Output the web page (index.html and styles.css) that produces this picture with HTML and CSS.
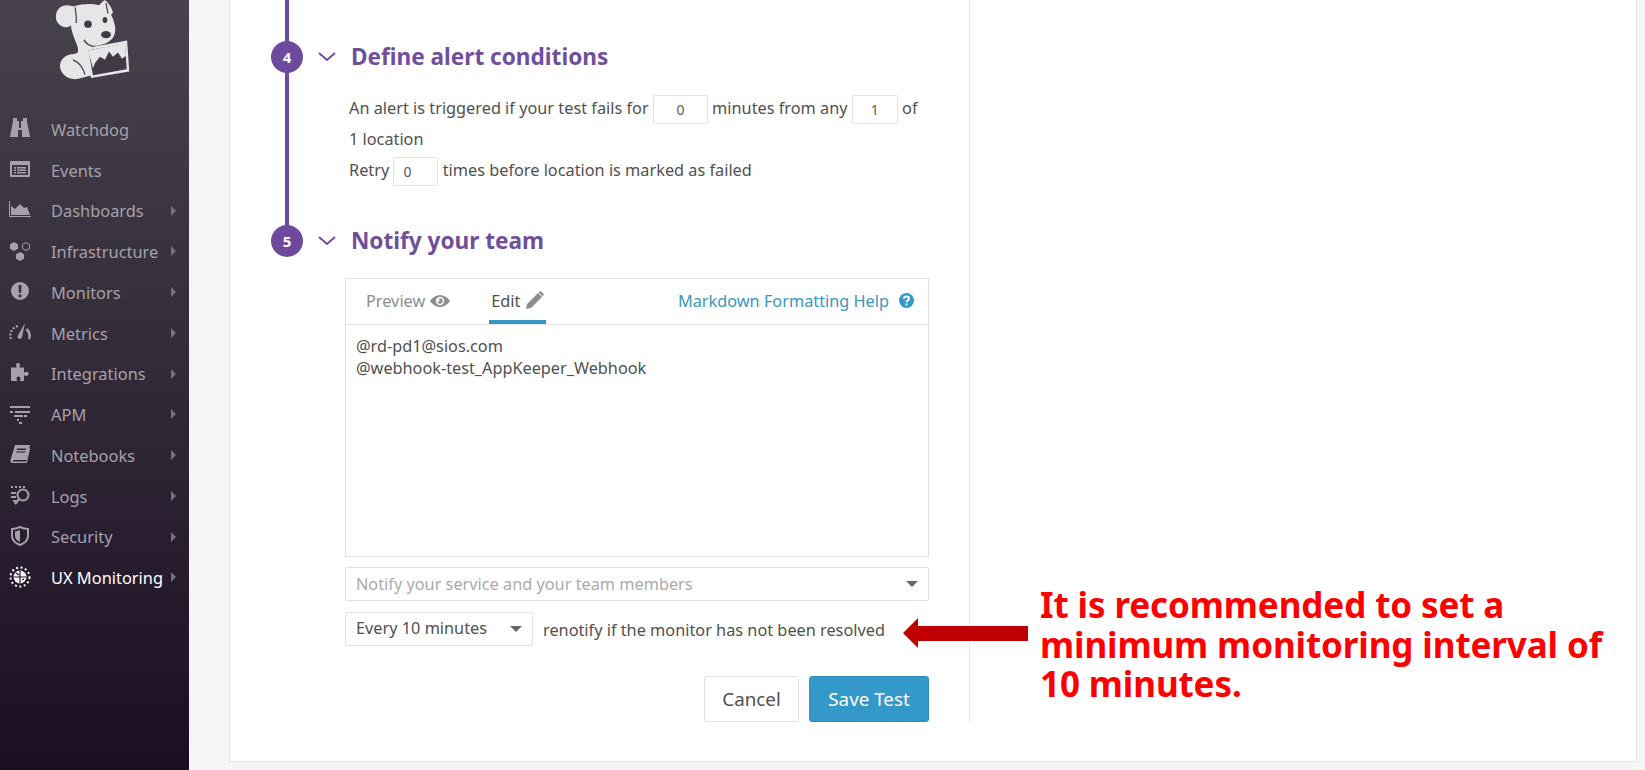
FILE: index.html
```html
<!DOCTYPE html>
<html lang="en">
<head>
    <meta charset="UTF-8">
    <meta name="viewport" content="width=device-width, initial-scale=1.0">
    <title>New Browser Test</title>
    <link rel="stylesheet" href="styles.css">
</head>
<body>
    <nav class="sidebar">
        <div class="logo">
            <svg width="120" height="105" viewBox="0 0 120 100" preserveAspectRatio="none">
                <path fill="#e6e5e7" d="M41 6c8-2 17-3 25-1 2-2 4-4 6-5 4 3 7 8 8 12l-2 2c3 5 5 12 4 17-1 5-5 9-11 11l-11 3-5 1 3 26-9 2c-3 1-7 2-10 1-7-1-12-7-12-12 0-6 5-10 10-11 3-1 7 0 8-3 1-4-3-10-5-16-1-3-2-6-2-9-2 2-4 2-6 2-6-1-10-6-9-12 1-6 6-9 11-9 3 0 5 1 7 1z"/>
                <path fill="none" stroke="#3f3a46" stroke-width="1.200" d="M42 7c1 5 2 10 1 15M73 3l2 10M40 57c5 2 10 7 12 14"/>
                <ellipse cx="55" cy="23" rx="3.800" ry="3.500" fill="#3f3a46"/>
                <ellipse cx="72" cy="19" rx="2.400" ry="2.800" fill="#3f3a46"/>
                <ellipse cx="73" cy="33" rx="5" ry="3.400" fill="#3f3a46"/>
                <path fill="none" stroke="#3f3a46" stroke-width="1.400" d="M51 38c3 5 9 7 15 6"/>
                <path fill="#3f3a46" stroke="#e6e5e7" stroke-width="2.400" d="M54 47l39-7 2 27-36 6z"/>
                <path fill="#e6e5e7" d="M55 48l37-7 1 12-4 3-4-6-5 4-4-5-4 8-5-3-5 6-2 5z"/>
            </svg>
        </div>
        <a class="nav-item">
            <svg class="nav-icon" viewBox="0 0 22 22"><path fill="currentColor" d="M4 1h4v3h2v7h2V4h2V1h4v3l3 16h-8v-7h-4v7H1L4 4z"/></svg>
            <span>Watchdog</span>
        </a>
        <a class="nav-item">
            <svg class="nav-icon" viewBox="0 0 22 22"><path fill="currentColor" fill-rule="evenodd" d="M2 3h18a1 1 0 0 1 1 1v14a1 1 0 0 1-1 1H2a1 1 0 0 1-1-1V4a1 1 0 0 1 1-1zm1 4v10h16V7zm2 2h2v1.500H5zm3 0h9v1.500H8zm-3 2.500h2V13H5zm3 0h9V13H8zM5 14h2v1.500H5zm3 0h9v1.500H8z"/></svg>
            <span>Events</span>
        </a>
        <a class="nav-item has-sub">
            <svg class="nav-icon" viewBox="0 0 22 22"><path fill="currentColor" d="M0 2h1v15h21v1H0z"/><path fill="currentColor" d="M2 16V7l4 3 5-5 4 4 3-1 3 8z"/></svg>
            <span>Dashboards</span>
        </a>
        <a class="nav-item has-sub">
            <svg class="nav-icon" viewBox="0 0 22 22"><path fill="currentColor" d="M5 2l4 2.300v4.500L5 11 1 8.800V4.300zM11 12l4 2.300v4.500L11 21l-4-2.200v-4.500z"/><path fill="none" stroke="currentColor" d="M17 2.500l3.500 2v4l-3.500 2-3.500-2v-4z"/></svg>
            <span>Infrastructure</span>
        </a>
        <a class="nav-item has-sub">
            <svg class="nav-icon" viewBox="0 0 22 22"><path fill="currentColor" fill-rule="evenodd" d="M11 2a9 9 0 1 1 0 18 9 9 0 0 1 0-18zM9.500 5l.4 8h2.200l.4-8zM11 14.200a1.600 1.600 0 1 0 0 3.200 1.600 1.600 0 0 0 0-3.200z"/></svg>
            <span>Monitors</span>
        </a>
        <a class="nav-item has-sub">
            <svg class="nav-icon" viewBox="0 0 22 22"><path fill="none" stroke="currentColor" stroke-width="2.200" stroke-dasharray="2 1.600" d="M2 18a9.500 9.500 0 0 1 8-13"/><path fill="none" stroke="currentColor" stroke-width="2.400" d="M17.500 8a9.500 9.500 0 0 1 2.500 10"/><path fill="currentColor" d="M16 2l-7 12.500a2.200 2.200 0 1 0 4 1.500z"/></svg>
            <span>Metrics</span>
        </a>
        <a class="nav-item has-sub">
            <svg class="nav-icon" viewBox="0 0 22 22"><path fill="currentColor" d="M7 3a2 2 0 0 1 4 0c0 1-.5 1.500-.5 2.500H15v5c1 0 1.500-.8 2.500-.8a2 2 0 0 1 0 4.300c-1 0-1.500-.8-2.500-.8V19h-4c0-1 .5-1.500.5-2.500a2 2 0 0 0-4 0c0 1 .5 1.500.5 2.500H2V5.500h5.500C7.500 4.500 7 4 7 3z"/></svg>
            <span>Integrations</span>
        </a>
        <a class="nav-item has-sub">
            <svg class="nav-icon" viewBox="0 0 22 22"><path fill="currentColor" d="M1 3h20v2H1zM1 8h3v2H1zM6 8h15v2H6zM5 12h9v2H5zM15 12h3v2h-3zM8 16h2v2H8zM10 19h3v2h-3z"/></svg>
            <span>APM</span>
        </a>
        <a class="nav-item has-sub">
            <svg class="nav-icon" viewBox="0 0 22 22"><path fill="currentColor" fill-rule="evenodd" d="M6 2h15l-3 15H5c-1 0-1.500 1-1 1.500h13.500l3-13.500.5 1-3 14H4c-2 0-3-1-2.500-3zM8 5.500l-.3 1.500h9l.3-1.500zm-.6 3l-.2 1h9l.2-1z"/></svg>
            <span>Notebooks</span>
        </a>
        <a class="nav-item has-sub">
            <svg class="nav-icon" viewBox="0 0 22 22"><path fill="currentColor" d="M2 2h2v2H2zM6 2h2v2H6zM10 2h2v2h-2zM14 2h2v2h-2zM2 8h5v2H2zM2 12h5v2H2zM4 16h3v2H4z"/><circle cx="14" cy="11" r="5.500" fill="none" stroke="currentColor" stroke-width="2"/><path stroke="currentColor" stroke-width="2.400" d="M10 15l-4 5"/></svg>
            <span>Logs</span>
        </a>
        <a class="nav-item has-sub">
            <svg class="nav-icon" viewBox="0 0 22 22"><path fill="none" stroke="currentColor" stroke-width="2" d="M11 2c3 1.500 5 2 8 2v7c0 4-3 7-8 9-5-2-8-5-8-9V4c3 0 5-.5 8-2z"/><path fill="currentColor" d="M11 5c-2 1-3.500 1.200-5 1.300V11c0 2.500 2 4.500 5 6z"/></svg>
            <span>Security</span>
        </a>
        <a class="nav-item has-sub is-active">
            <svg class="nav-icon" viewBox="0 0 22 22"><circle cx="11" cy="11" r="6.500" fill="currentColor"/><path stroke="#1f1329" stroke-width="1.200" fill="none" d="M11 4.500v13M4.500 11h13M7 7l3 2M13 14l2-1"/><circle cx="11" cy="11" r="9.500" fill="none" stroke="currentColor" stroke-width="2" stroke-dasharray="2 2.500"/></svg>
            <span>UX Monitoring</span>
        </a>
    </nav>

    <main class="main">
        <div class="card">
            <section class="form-pane">
                <div class="step">
                    <header class="step-head">
                        <span class="step-num">4</span>
                        <svg class="chevron" viewBox="0 0 18 10"><path fill="none" stroke="currentColor" stroke-width="2" d="M1 1l8 7 8-7"/></svg>
                        <h2>Define alert conditions</h2>
                    </header>
                    <div class="step-body">
                        <p class="cond">An alert is triggered if your test fails for <input class="num num-wide" value="0"> minutes from any <input class="num" value="1"> of 1 location</p>
                        <p class="cond retry">Retry <input class="num num-left" value="0"> times before location is marked as failed</p>
                    </div>
                </div>
                <div class="step step-notify">
                    <header class="step-head">
                        <span class="step-num">5</span>
                        <svg class="chevron" viewBox="0 0 18 10"><path fill="none" stroke="currentColor" stroke-width="2" d="M1 1l8 7 8-7"/></svg>
                        <h2>Notify your team</h2>
                    </header>
                    <div class="step-body notify-body">
                        <div class="editor">
                            <div class="tabs">
                                <a class="tab">Preview
                                    <svg width="20" height="14" viewBox="0 0 20 14"><path fill="#8d8d8d" fill-rule="evenodd" d="M10 1c4 0 7.500 2.500 10 6-2.500 3.500-6 6-10 6S2.500 10.500 0 7c2.500-3.500 6-6 10-6zm0 1.800a4.200 4.200 0 1 0 0 8.400 4.200 4.200 0 0 0 0-8.400zm0 1.500a2.700 2.700 0 1 1-2.700 2.700c0 .6.800 1 1.500.6.700-.3 1-1.200.5-2-.3-.6-.3-1.100.7-1.300z"/></svg>
                                </a>
                                <a class="tab is-current">Edit
                                    <svg width="19" height="19" viewBox="0 0 19 19"><path fill="#8d8d8d" d="M13 2l4 4L6 17l-5 1 1-5zM14.500 .8a1.500 1.500 0 0 1 2 0l1.700 1.700a1.500 1.500 0 0 1 0 2L17.500 5.300 13.700 1.500z"/></svg>
                                </a>
                                <a class="help">Markdown Formatting Help
                                    <svg width="15" height="15" viewBox="0 0 15 15"><circle cx="7.500" cy="7.500" r="7.500" fill="#3498c9"/><path fill="none" stroke="#fff" stroke-width="2" d="M5 5.800c0-3 5-3 5 0 0 1.800-2.500 1.700-2.500 3.400"/><rect x="6.500" y="10.500" width="2" height="2" fill="#fff"/></svg>
                                </a>
                            </div>
                            <div class="message">@rd-pd1@sios.com<br>@webhook-test_AppKeeper_Webhook</div>
                        </div>
                        <div class="select select-full">
                            <span class="placeholder">Notify your service and your team members</span>
                            <i class="caret"></i>
                        </div>
                        <div class="renotify">
                            <div class="select select-short">
                                <span class="select-value">Every 10 minutes</span>
                                <i class="caret"></i>
                            </div>
                            <span class="renotify-text">renotify if the monitor has not been resolved</span>
                        </div>
                        <div class="actions">
                            <button class="btn">Cancel</button>
                            <button class="btn btn-primary">Save Test</button>
                        </div>
                    </div>
                </div>
            </section>
            <aside class="side-pane"></aside>
        </div>
    </main>

    <svg class="note-arrow" width="125" height="30" viewBox="0 0 125 30"><path fill="#c00000" d="M0 15L15 0v8h110v15H15v7z"/></svg>
    <p class="note">It is recommended to set a minimum monitoring interval of 10 minutes.</p>
</body>
</html>
```

FILE: styles.css
```css
* {
    box-sizing: border-box;
}
body {
    display: flex;
    height: 770px;
    margin: 0;
    overflow: hidden;
    background-color: #f5f5f5;
    color: #505050;
    font-family: "Noto Sans", sans-serif;
    font-size: 16.3px;
}

.sidebar {
    flex: 0 0 189px;
    background: linear-gradient(#47424c, #3a3440 30%, #1b0e23);
}
.logo {
    height: 109px;
    padding-left: 33px;
    overflow: hidden;
}
.nav-item {
    display: flex;
    align-items: center;
    position: relative;
    height: 40.75px;
    padding-left: 9px;
    color: #a6a1aa;
    font-size: 16.4px;
    white-space: nowrap;
}
.nav-icon {
    flex: 0 0 22px;
    width: 22px;
    height: 22px;
    margin-right: 20px;
    margin-top: -2px;
}
.has-sub::after {
    content: "";
    position: absolute;
    left: 171px;
    top: 15px;
    border-left: 5px solid #77717d;
    border-top: 5px solid transparent;
    border-bottom: 5px solid transparent;
}
.is-active {
    color: #fff;
}

.main {
    flex: 1;
    padding: 0 8px 8px 40px;
}
.card {
    display: flex;
    height: 100%;
    padding-bottom: 39px;
    background-color: #fff;
    border: 1px solid #e3e3e3;
    border-top: none;
}
.form-pane {
    position: relative;
    flex: 0 0 740px;
    padding: 41px 40px 0 41px;
    border-right: 1px solid #e6e6e6;
}
.form-pane::before {
    content: "";
    position: absolute;
    left: 55px;
    top: 0;
    width: 4px;
    height: 239px;
    background-color: #6d4a9e;
}
.side-pane {
    flex: 1;
}

.step-head {
    display: flex;
    align-items: center;
    position: relative;
    height: 32px;
}
.step-num {
    flex: 0 0 32px;
    height: 32px;
    margin-right: 15px;
    border-radius: 50%;
    background-color: #6d4a9e;
    color: #fff;
    font-size: 15px;
    font-weight: 700;
    line-height: 32px;
    text-align: center;
}
.chevron {
    width: 18px;
    height: 10px;
    margin-right: 15px;
    color: #6d4a9e;
}
.step-head h2 {
    margin: -2px 0 0;
    color: #6f4f9b;
    font-size: 22.6px;
    font-weight: 700;
}
.step-body {
    padding: 20px 0 0 78px;
}
.cond {
    width: 576px;
    margin: 0;
    line-height: 30px;
}
.retry {
    margin-top: 1px;
}
.num {
    width: 46px;
    height: 29px;
    padding: 0;
    border: 1px solid #e3e3e3;
    border-radius: 2px;
    color: #5a5a5a;
    font-family: inherit;
    font-size: 14px;
    text-align: center;
    vertical-align: middle;
}
.num-wide {
    width: 55px;
}
.num-left {
    width: 45px;
    padding-left: 9px;
    text-align: left;
}

.step-notify {
    margin-top: 39px;
}
.notify-body {
    padding: 21px 0 0 74px;
    width: 658px;
}
.editor {
    height: 279px;
    border: 1px solid #e1e1e1;
}
.tabs {
    display: flex;
    align-items: center;
    height: 46px;
    border-bottom: 1px solid #e6e6e6;
    padding: 0 14px 0 20px;
}
.tab {
    display: flex;
    align-items: center;
    gap: 5px;
    position: relative;
    height: 100%;
    margin-right: 41px;
    padding-bottom: 2px;
    color: #8d8d8d;
}
.tab.is-current {
    color: #505050;
}
.tab.is-current::after {
    content: "";
    position: absolute;
    left: -2px;
    right: -2px;
    bottom: 0;
    height: 4px;
    background-color: #3a96c0;
}
.help {
    display: flex;
    align-items: center;
    gap: 10px;
    margin-left: auto;
    padding-bottom: 2px;
    color: #3a96c0;
}
.message {
    padding: 10px 10px;
    font-size: 16.25px;
    line-height: 22px;
}
.select {
    display: flex;
    align-items: center;
    justify-content: space-between;
    height: 34px;
    padding: 0 10px;
    border: 1px solid #e1e1e1;
    border-radius: 2px;
}
.select-full {
    margin-top: 10px;
}
.select-short {
    flex: 0 0 188px;
}
.select-value {
    margin-top: -2px;
}
.placeholder {
    color: #aaa;
}
.caret {
    border-top: 6px solid #666;
    border-left: 6px solid transparent;
    border-right: 6px solid transparent;
}
.renotify {
    display: flex;
    align-items: center;
    gap: 10px;
    margin-top: 11px;
}
.renotify-text {
    margin-top: 2px;
}
.actions {
    display: flex;
    justify-content: flex-end;
    gap: 10px;
    margin-top: 30px;
}
.btn {
    height: 46px;
    width: 95px;
    padding: 0;
    background-color: #fff;
    border: 1px solid #e1e1e1;
    border-radius: 3px;
    color: #505050;
    font-family: inherit;
    font-size: 18.8px;
}
.btn-primary {
    width: 120px;
    background-color: #3498c9;
    border-color: #2f8dbb;
    color: #fff;
}

.note-arrow {
    position: absolute;
    left: 903px;
    top: 618px;
}
.note {
    position: absolute;
    left: 1040px;
    top: 585px;
    width: 590px;
    margin: 0;
    color: #ff0000;
    font-family: "Noto Sans", sans-serif;
    font-size: 35px;
    font-weight: 700;
    letter-spacing: -0.1px;
    line-height: 39.5px;
}
```
